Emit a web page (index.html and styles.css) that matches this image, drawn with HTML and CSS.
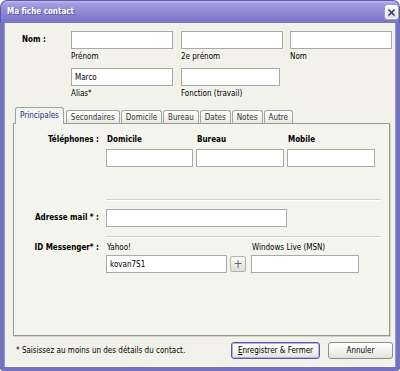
FILE: index.html
```html
<!DOCTYPE html>
<html lang="fr">

<head>
  <meta charset="UTF-8" />
  <meta name="viewport" content="width=device-width, initial-scale=1.0" />
  <title>Ma fiche contact</title>

  <link rel="stylesheet" href="styles.css">

</head>

<body>

  <div class="window">

    <!-- Barre de titre -->
    <div class="titlebar">
      <span class="title">Ma fiche contact</span>
      <span class="close-btn">
        <svg width="7" height="7" viewBox="0 0 7 7"><path d="M0.5 0.5L6.5 6.5M6.5 0.5L0.5 6.5" stroke="#26366a" stroke-width="1.5" /></svg>
      </span>
    </div>

    <div class="frame">

      <!-- Nom -->
      <div class="names">
        <div class="names-label">Nom :</div>
        <div class="field"><input class="txt" type="text"><span class="caption">Prénom</span></div>
        <div class="field"><input class="txt" type="text"><span class="caption">2e prénom</span></div>
        <div class="field"><input class="txt" type="text"><span class="caption">Nom</span></div>
        <div class="field col2"><input class="txt" type="text" value="Marco"><span class="caption">Alias*</span></div>
        <div class="field"><input class="txt short" type="text"><span class="caption">Fonction (travail)</span></div>
      </div>

      <!-- Onglets -->
      <div class="tabs">
        <span class="tab active">Principales</span>
        <span class="tab">Secondaires</span>
        <span class="tab">Domicile</span>
        <span class="tab">Bureau</span>
        <span class="tab">Dates</span>
        <span class="tab">Notes</span>
        <span class="tab">Autre</span>
      </div>

      <div class="panel">

        <div class="row phones">
          <div class="lbl">Téléphones :</div>
          <div class="content phone-grid">
            <span class="head">Domicile</span>
            <span class="head">Bureau</span>
            <span class="head">Mobile</span>
            <input class="txt" type="text">
            <input class="txt" type="text">
            <input class="txt" type="text">
          </div>
        </div>

        <div class="sep sep-first"></div>

        <div class="row mail">
          <div class="lbl">Adresse mail * :</div>
          <div class="content"><input class="txt mail-input" type="text"></div>
        </div>

        <div class="sep sep-second"></div>

        <div class="row messenger">
          <div class="lbl">ID Messenger* :</div>
          <div class="content msg-grid">
            <span class="sub">Yahoo!</span>
            <span></span>
            <span class="sub">Windows Live (MSN)</span>
            <input class="txt" type="text" value="kovan7S1">
            <span class="plus-btn">+</span>
            <input class="txt" type="text">
          </div>
        </div>

      </div>

      <!-- Pied -->
      <div class="footer">
        <span class="note">* Saisissez au moins un des détails du contact.</span>
        <div class="buttons">
          <span class="btn default"><u>E</u>nregistrer &amp; Fermer</span>
          <span class="btn cancel">Annuler</span>
        </div>
      </div>

    </div>
  </div>

</body>

</html>
```

FILE: styles.css
```css
* {
  box-sizing: border-box;
}

body {
  margin: 0;
  width: 400px;
  height: 371px;
  overflow: hidden;
  font-family: "DejaVu Sans Condensed", "DejaVu Sans", sans-serif;
  font-size: 8px;
  color: #000;
  background: #fff;
}

.window {
  width: 400px;
  height: 371px;
}

/* barre de titre */
.titlebar {
  height: 23px;
  display: flex;
  align-items: flex-start;
  border-radius: 7px 7px 0 0;
  background: linear-gradient(#c4c1f0 0, #a5a1e2 2px, #8f8bd6 45%, #8480cf 70%, #7874c4 100%);
  border: 1px solid #5f5aa9;
  border-bottom: none;
}

.title {
  padding: 5px 0 0 6px;
  line-height: 12px;
  font-weight: bold;
  color: #fff;
  text-shadow: 1px 1px 0 #5b57a3;
}

.close-btn {
  margin: 4px 1px 0 auto;
  width: 13px;
  height: 14px;
  display: flex;
  align-items: center;
  justify-content: center;
  border: 1px solid #fff;
  border-radius: 2px;
  background: linear-gradient(#fafafc, #dcdce6);
  box-shadow: 0 0 0 1px #9b98c8;
}

/* cadre */
.frame {
  height: 348px;
  background: #f2f2eb;
  border: 4px solid #7672c2;
  border-top: none;
  border-radius: 0 0 4px 4px;
  box-shadow: inset 1px 0 0 #9996d6, inset -1px 0 0 #9996d6;
  padding-top: 8px;
}

.txt {
  display: block;
  height: 18px;
  margin: 0;
  padding: 0 3px;
  border: 1px solid #a8a8a8;
  background: #fff;
  font: inherit;
  color: #000;
  outline: none;
}

/* nom */
.names {
  display: grid;
  grid-template-columns: 67px 110px 109px 102px;
  row-gap: 5px;
}

.names-label {
  padding-left: 18px;
  line-height: 18px;
  font-weight: bold;
}

.field .txt {
  width: 102px;
}

.field .txt.short {
  width: 99px;
}

.col2 {
  grid-column-start: 2;
}

.caption {
  display: block;
  margin-top: 2px;
  line-height: 12px;
}

/* onglets */
.tabs {
  display: flex;
  align-items: flex-end;
  height: 16px;
  margin: 8px 0 0 11px;
}

.tab {
  height: 14px;
  padding: 1px 4px 0;
  margin-right: 1px;
  line-height: 12px;
  color: #333;
  border: 1px solid #9ba4a6;
  border-bottom: none;
  border-radius: 3px 3px 0 0;
  background: linear-gradient(#fefefe, #efefea 70%, #e4e4dc);
}

.tab.active {
  position: relative;
  z-index: 2;
  height: 17px;
  padding-top: 2px;
  margin-right: 2px;
  color: #13308a;
  background: #f4f4ee;
}

.panel {
  position: relative;
  z-index: 1;
  height: 213px;
  margin: -1px 6px 0 9px;
  border: 1px solid #919b9c;
  background: #f4f4ee;
  box-shadow: 1px 1px 0 #d3d3c8;
}

.row {
  display: flex;
}

.lbl {
  flex: none;
  width: 85px;
  text-align: right;
  font-weight: bold;
  line-height: 12px;
}

.content {
  margin-left: 7px;
}

.phones {
  margin-top: 10px;
}

.phone-grid {
  display: grid;
  grid-template-columns: 87px 88px 88px;
  column-gap: 3px;
  row-gap: 3px;
}

.head {
  padding-left: 1px;
  font-weight: bold;
  line-height: 12px;
}

.sep {
  margin-left: 92px;
  width: 274px;
  border-top: 1px solid #d0d0c8;
  border-bottom: 1px solid #fff;
}

.sep-first {
  margin-top: 32px;
}

.sep-second {
  margin-top: 9px;
}

.mail {
  margin-top: 8px;
  align-items: center;
}

.mail-input {
  width: 181px;
}

.messenger {
  margin-top: 4px;
}

.msg-grid {
  display: grid;
  grid-template-columns: 121px 24px 108px;
  row-gap: 1px;
  align-items: center;
}

.sub {
  padding-left: 1px;
  line-height: 12px;
}

.plus-btn {
  width: 16px;
  height: 16px;
  margin-left: 3px;
  display: flex;
  align-items: center;
  justify-content: center;
  border: 1px solid #b5b5b0;
  border-radius: 2px;
  background: linear-gradient(#fbfbf9, #dcdcd6);
  color: #666;
  font-size: 12px;
  line-height: 1;
}

/* pied */
.footer {
  display: flex;
  align-items: center;
  justify-content: space-between;
  padding: 6px 3px 0 12px;
}

.buttons {
  display: flex;
  gap: 8px;
}

.btn {
  height: 17px;
  display: flex;
  align-items: center;
  justify-content: center;
  border: 1px solid #8d8d8a;
  border-radius: 3px;
  background: linear-gradient(#ffffff, #f1f1ec 60%, #e1e1da);
  color: #000;
}

.btn.default {
  width: 89px;
  border-color: #5a55a6;
  box-shadow: inset 0 0 0 1px #b5b2e6;
}

.btn.cancel {
  width: 65px;
}
```
